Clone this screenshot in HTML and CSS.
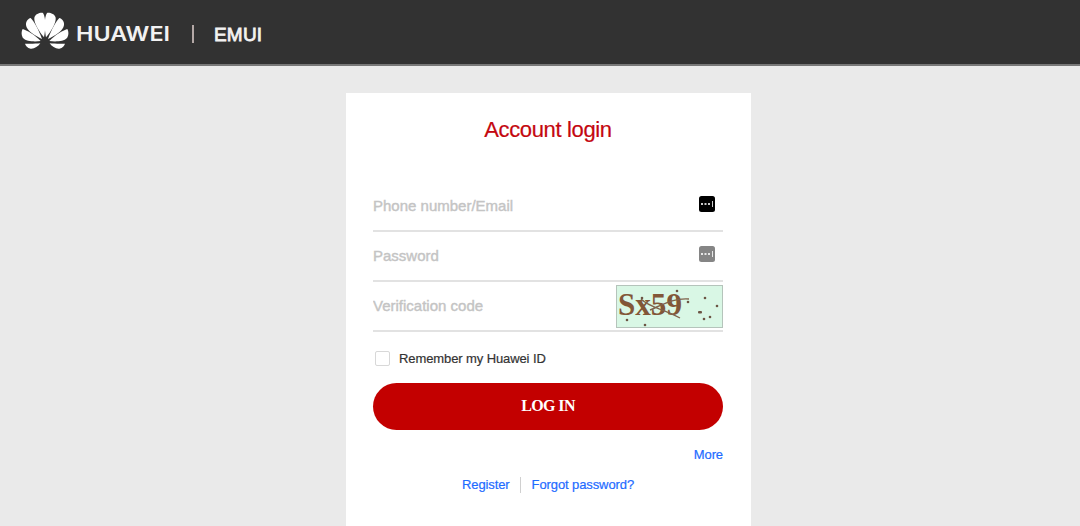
FILE: index.html
```html
<!DOCTYPE html>
<html lang="en">
<head>
    <meta charset="UTF-8">
    <meta name="viewport" content="width=device-width, initial-scale=1.0">
    <title>Account login</title>
    <link rel="stylesheet" href="styles.css">
</head>
<body>

    <!-- Header -->
    <header class="header">
        <svg class="logo" viewBox="0 0 144 111" fill="#fff">
            <g id="petals">
                <path d="M69 76C56 60 38 34 40 17C43 5 59 1 66 3C75 17 74 50 69 76Z" />
                <path d="M63 81C43 71 17 57 15 39C14 27 22 20 29 18C39 28 52 51 63 81Z" />
                <path d="M59 87C44 90 15 89 7 79C0 70 1 58 5 51C19 56 41 68 59 87Z" />
                <path d="M58 94C51 104 40 111 29 110C19 108 14 101 12 95C28 96 46 95 58 94Z" />
            </g>
            <use href="#petals" transform="translate(144 0) scale(-1 1)" />
        </svg>
        <svg class="wordmark" viewBox="0 0 95 24">
            <text x="0" y="19" textLength="94" lengthAdjust="spacingAndGlyphs">HUAWEI</text>
        </svg>
        <span class="divider"></span>
        <span class="product">EMUI</span>
    </header>

    <!-- Login card -->
    <main class="card">
        <h1 class="title">Account login</h1>

        <form class="form">
            <div class="field">
                <input class="input" type="text" placeholder="Phone number/Email">
                <svg class="key" viewBox="0 0 16 16">
                    <rect width="16" height="16" rx="2.5" />
                    <path d="M2 7h2v2H2zM5.5 7h2v2h-2zM9 7h2v2H9zM13 5h1v6h-1z" fill="#fff" opacity=".8" />
                </svg>
            </div>
            <div class="field">
                <input class="input" type="password" placeholder="Password">
                <svg class="key key-muted" viewBox="0 0 16 16">
                    <rect width="16" height="16" rx="2.5" />
                    <path d="M2 7h2v2H2zM5.5 7h2v2h-2zM9 7h2v2H9zM13 5h1v6h-1z" fill="#fff" opacity=".8" />
                </svg>
            </div>
            <div class="field field-code">
                <input class="input" type="text" placeholder="Verification code">
                <!-- Captcha -->
                <svg class="captcha" viewBox="0 0 107 43">
                    <rect x=".5" y=".5" width="106" height="42" fill="#d9f7e5" stroke="#b5c4bb" />
                    <text x="2" y="30" textLength="64" lengthAdjust="spacingAndGlyphs">Sx59</text>
                    <path d="M25 14C34 23 46 23 64 33M34 25C48 19 57 13 73 14" fill="none" stroke="#80634b" stroke-width="1.4" />
                    <g fill="#6c5544">
                        <circle cx="61" cy="6" r="1.3" />
                        <circle cx="72" cy="17" r="1.3" />
                        <circle cx="89" cy="13" r="1.3" />
                        <circle cx="101" cy="21" r="1.3" />
                        <circle cx="94" cy="32" r="1.3" />
                        <circle cx="88" cy="34" r="1.3" />
                        <circle cx="11" cy="35" r="1.3" />
                        <circle cx="29" cy="40" r="1.3" />
                        <circle cx="26" cy="13" r="1.3" />
                        <rect x="82" y="26" width="4" height="2.5" rx="1" />
                    </g>
                </svg>
            </div>

            <label class="remember">
                <input class="checkbox" type="checkbox">
                <span>Remember my Huawei ID</span>
            </label>

            <button class="submit" type="button">LOG IN</button>
        </form>

        <a class="more" href="#">More</a>
        <nav class="links">
            <a class="register" href="#">Register</a>
            <a class="forgot" href="#">Forgot password?</a>
        </nav>
    </main>

</body>
</html>
```
FILE: styles.css
```css
* {
    box-sizing: border-box;
}

body {
    font-family: "Liberation Sans", Arial, sans-serif;
    margin: 0;
    height: 100vh;
    background-color: #eaeaea;
    overflow: hidden;
    display: flex;
    flex-direction: column;
}

/* Header */
.header {
    flex: none;
    display: flex;
    align-items: center;
    height: 66px;
    padding: 0 0 0 21px;
    background-color: #323232;
    border-bottom: 2px solid #787878;
}

.logo {
    width: 48px;
    height: 37px;
    margin-top: -4px;
}

.wordmark {
    width: 95px;
    height: 24px;
    margin: 4px 0 0 7px;
}

.wordmark text {
    font: 600 20px Inter, sans-serif;
    fill: #f2f2f2;
}

.divider {
    width: 2px;
    height: 18px;
    margin: 4px 20px 0 21px;
    background-color: #b4a8a6;
}

.product {
    margin-top: 5px;
    font-size: 19px;
    letter-spacing: 0.2px;
    color: #f2f2f2;
    -webkit-text-stroke: 0.8px #f2f2f2;
}

/* Login card */
.card {
    flex: 1;
    width: 405px;
    margin: 27px 0 0 346px;
    padding: 23px 28px 0 27px;
    background-color: #fff;
}

.title {
    margin: 0 0 39px;
    font-size: 22px;
    font-weight: normal;
    line-height: 27px;
    letter-spacing: -0.35px;
    text-align: center;
    color: #c4070f;
    -webkit-text-stroke: 0.2px #c4070f;
}

.field {
    display: flex;
    align-items: center;
    height: 50px;
    padding-right: 8px;
    border-bottom: 2px solid #e2e2e2;
}

.field-code {
    padding-right: 0;
}

.input {
    flex: 1;
    min-width: 0;
    padding: 0 0 2px;
    border: none;
    outline: none;
    background: none;
    font-family: inherit;
    font-size: 15px;
}

.input::placeholder {
    color: #c4c4c4;
    -webkit-text-stroke: 0.4px #c4c4c4;
}

.key {
    width: 16px;
    height: 16px;
    margin-top: -4px;
}

.key-muted {
    fill: #858585;
}

.captcha {
    width: 107px;
    height: 43px;
}

.captcha text {
    font: bold 32px "Liberation Serif", serif;
    fill: #825637;
}

.remember {
    display: flex;
    align-items: center;
    gap: 9px;
    height: 51px;
    padding: 2px 0 0 2px;
    font-size: 13px;
    letter-spacing: -0.1px;
    color: #333;
    -webkit-text-stroke: 0.2px #333;
}

.checkbox {
    appearance: none;
    width: 15px;
    height: 15px;
    margin: 0;
    border: 1px solid #d8d8d8;
    border-radius: 2px;
}

.submit {
    display: block;
    width: 100%;
    height: 47px;
    padding: 0 0 2px;
    border: none;
    border-radius: 24px;
    background-color: #c30000;
    color: #fff;
    font: bold 16px "Liberation Serif", serif;
    letter-spacing: -0.6px;
}

.more {
    display: block;
    margin-top: 17px;
    text-align: right;
}

.more,
.links {
    font-size: 13px;
    line-height: 16px;
    letter-spacing: -0.1px;
}

.links {
    display: flex;
    justify-content: center;
    margin-top: 14px;
}

.links a,
.more {
    color: #1e6bff;
    text-decoration: none;
    -webkit-text-stroke: 0.2px #1e6bff;
}

.register {
    padding-right: 10px;
    border-right: 1px solid #d0d0d0;
}

.forgot {
    padding-left: 11px;
}
```
